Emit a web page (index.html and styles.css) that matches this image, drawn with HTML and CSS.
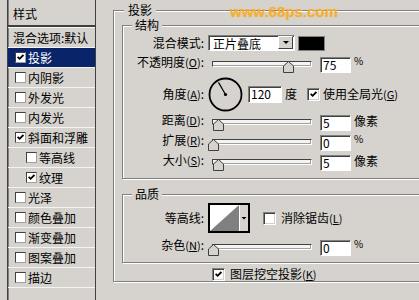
FILE: index.html
```html
<!DOCTYPE html>
<html lang="zh-CN">
<head>
  <meta charset="UTF-8" />
  <title>图层样式 - 投影</title>
  <link rel="stylesheet" href="styles.css">
</head>
<body>
  <div class="dialog">
    <div class="style-list">
      <div class="list-head">样式</div>
      <div class="list-item blend">混合选项:默认</div>
      <div class="list-item active"><span class="cb"><svg class="tick" viewBox="0 0 7 7"><path d="M0.6 2.8 L2.6 4.8 L6.4 1"/></svg></span>投影</div>
      <div class="list-item"><span class="cb"></span>内阴影</div>
      <div class="list-item"><span class="cb"></span>外发光</div>
      <div class="list-item"><span class="cb"></span>内发光</div>
      <div class="list-item"><span class="cb"><svg class="tick" viewBox="0 0 7 7"><path d="M0.6 2.8 L2.6 4.8 L6.4 1"/></svg></span>斜面和浮雕</div>
      <div class="list-item sub"><span class="cb"></span>等高线</div>
      <div class="list-item sub"><span class="cb"><svg class="tick" viewBox="0 0 7 7"><path d="M0.6 2.8 L2.6 4.8 L6.4 1"/></svg></span>纹理</div>
      <div class="list-item"><span class="cb"></span>光泽</div>
      <div class="list-item"><span class="cb"></span>颜色叠加</div>
      <div class="list-item"><span class="cb"></span>渐变叠加</div>
      <div class="list-item"><span class="cb"></span>图案叠加</div>
      <div class="list-item"><span class="cb"></span>描边</div>
      <div class="list-item"></div>
    </div>

    <div class="panel">
      <span class="watermark">www.68ps.com</span>

      <fieldset class="group outer">
        <legend>投影</legend>

        <fieldset class="group struct">
          <legend>结构</legend>

          <div class="row mode-row">
            <span class="label">混合模式:</span>
            <div class="select">
              <span class="val">正片叠底</span>
              <span class="drop"><i class="arrow"></i></span>
            </div>
            <span class="swatch"></span>
          </div>

          <div class="row slider-row first">
            <span class="label">不透明度<span class="key">(<u>O</u>)</span>:</span>
            <div class="track"><svg class="thumb" style="left: 70px" viewBox="0 0 11 12"><path d="M0.5 11.5 V5 L5.5 0.5 L10.5 5 V11.5 Z"/></svg></div>
            <span class="num">75</span>
            <span class="unit pct">%</span>
          </div>

          <div class="row angle-row">
            <span class="label">角度<span class="key">(<u>A</u>)</span>:</span>
            <svg class="dial" width="35" height="35" viewBox="0 0 35 35">
              <circle cx="17.5" cy="17.5" r="16" fill="none" stroke="#000" stroke-width="1.8"/>
              <line x1="17.5" y1="17.5" x2="10.5" y2="5.4" stroke="#000" stroke-width="1.2"/>
              <circle cx="17.5" cy="17.5" r="1.6" fill="#000"/>
            </svg>
            <span class="num wide">120</span>
            <span class="unit">度</span>
            <span class="cb global"><svg class="tick" viewBox="0 0 7 7"><path d="M0.6 2.8 L2.6 4.8 L6.4 1"/></svg></span>
            <span class="cb-text">使用全局光<span class="key">(<u>G</u>)</span></span>
          </div>

          <div class="row slider-row">
            <span class="label">距离<span class="key">(<u>D</u>)</span>:</span>
            <div class="track"><svg class="thumb" style="left: 0px" viewBox="0 0 11 12"><path d="M0.5 11.5 V5 L5.5 0.5 L10.5 5 V11.5 Z"/></svg></div>
            <span class="num">5</span>
            <span class="unit">像素</span>
          </div>

          <div class="row slider-row">
            <span class="label">扩展<span class="key">(<u>R</u>)</span>:</span>
            <div class="track"><svg class="thumb" style="left: -5px" viewBox="0 0 11 12"><path d="M0.5 11.5 V5 L5.5 0.5 L10.5 5 V11.5 Z"/></svg></div>
            <span class="num">0</span>
            <span class="unit pct">%</span>
          </div>

          <div class="row slider-row">
            <span class="label">大小<span class="key">(<u>S</u>)</span>:</span>
            <div class="track"><svg class="thumb" style="left: 0px" viewBox="0 0 11 12"><path d="M0.5 11.5 V5 L5.5 0.5 L10.5 5 V11.5 Z"/></svg></div>
            <span class="num">5</span>
            <span class="unit">像素</span>
          </div>
        </fieldset>

        <fieldset class="group quality">
          <legend>品质</legend>

          <div class="row contour-row">
            <span class="label">等高线:</span>
            <svg class="contour" width="42" height="30" viewBox="0 0 42 30">
              <rect x="0" y="0" width="42" height="30" fill="#000"/>
              <rect x="2" y="2" width="29" height="26" fill="#fff"/>
              <polygon points="2,28 31,2 31,28" fill="#808080"/>
              <rect x="31" y="2" width="9" height="26" fill="#d6d3ce"/>
              <line x1="31.5" y1="2" x2="31.5" y2="28" stroke="#fff"/>
              <polygon points="33.5,14 38.5,14 36,16.5" fill="#000"/>
            </svg>
            <span class="cb aa"></span>
            <span class="cb-text">消除锯齿<span class="key">(<u>L</u>)</span></span>
          </div>

          <div class="row slider-row noise">
            <span class="label">杂色<span class="key">(<u>N</u>)</span>:</span>
            <div class="track"><svg class="thumb" style="left: -5px" viewBox="0 0 11 12"><path d="M0.5 11.5 V5 L5.5 0.5 L10.5 5 V11.5 Z"/></svg></div>
            <span class="num">0</span>
            <span class="unit pct">%</span>
          </div>
        </fieldset>

        <div class="row knockout">
          <span class="cb"><svg class="tick" viewBox="0 0 7 7"><path d="M0.6 2.8 L2.6 4.8 L6.4 1"/></svg></span>
          <span class="cb-text">图层挖空投影<span class="key">(<u>K</u>)</span></span>
        </div>
      </fieldset>
    </div>
  </div>
</body>
</html>
```

FILE: styles.css
```css
* {
  box-sizing: border-box;
}

html, body {
  margin: 0;
  padding: 0;
}

body {
  width: 419px;
  height: 300px;
  overflow: hidden;
  background: #d6d3ce;
  color: #000;
  font-family: "Noto Sans CJK SC", "DejaVu Sans", sans-serif;
  font-size: 12px;
  line-height: 14px;
}

.dialog {
  display: flex;
  height: 300px;
  padding-left: 7px;
}

/* left list of styles */
.style-list {
  flex: none;
  width: 89px;
  border-left: 1px solid #404040;
  border-right: 1px solid #404040;
  box-shadow: inset 1px 0 0 #808080;
}

.list-head {
  height: 27px;
  padding: 7px 0 0 5px;
  border-bottom: 2px solid #404040;
}

.list-item {
  display: flex;
  align-items: center;
  gap: 2px;
  height: 20px;
  padding-left: 7px;
  border-bottom: 1px solid #f4f4f4;
}

.list-item.blend {
  height: 21px;
  padding-left: 5px;
  border-top: 1px solid #f4f4f4;
}

.list-item.active {
  background: #0a246a;
  color: #fff;
}

.list-item.sub {
  padding-left: 18px;
}

/* checkbox */
.cb {
  flex: none;
  display: inline-flex;
  align-items: center;
  justify-content: center;
  width: 13px;
  height: 13px;
  background: #fff;
  border: 1px solid;
  border-color: #808080 #fff #fff #808080;
  box-shadow: inset 1px 1px 0 #404040, inset -1px -1px 0 #d4d0c8;
}

.style-list .cb {
  width: 11px;
  height: 11px;
  border-color: #404040 #a0a0a0 #a0a0a0 #404040;
  box-shadow: none;
}

.tick {
  width: 7px;
  height: 7px;
  fill: none;
  stroke: #000;
  stroke-width: 1.8;
}

/* right panel */
.panel {
  position: relative;
  flex: 1;
  margin-left: 17px;
  padding-top: 3px;
}

.watermark {
  position: absolute;
  left: 117px;
  top: 3px;
  z-index: 1;
  font-family: "Liberation Sans", Arial, sans-serif;
  font-size: 15px;
  font-weight: bold;
  line-height: 17px;
  color: rgba(247, 172, 40, 0.85);
  text-shadow: 0 0 1px rgba(247, 172, 40, 0.6);
}

.group {
  margin: 0;
  padding: 0;
  min-width: 0;
  border: 1px solid #808080;
  box-shadow: inset 1px 1px 0 #fff, 1px 1px 0 #fff;
}

.group legend {
  margin-left: 9px;
  padding: 0 3px;
  line-height: 14px;
  background: #d6d3ce;
}

.outer {
  width: 330px;
  padding: 1px 0 0 8px;
}

.outer > legend {
  margin-left: 2px;
  padding: 0 4px;
}

.struct {
  padding: 1px 0 5px;
}

.quality {
  margin-top: 8px;
  padding: 2px 0 4px;
}

.row {
  display: flex;
  align-items: flex-start;
  height: 20px;
}

.label {
  flex: none;
  width: 82px;
  padding-right: 1px;
  text-align: right;
}

.key {
  font-size: 11px;
}

.mode-row {
  align-items: center;
}

.select {
  display: flex;
  width: 87px;
  height: 16px;
  margin-left: 3px;
  padding: 1px;
  background: #fff;
  border: 1px solid;
  border-color: #808080 #fff #fff #808080;
  box-shadow: inset 1px 1px 0 #404040;
}

.select .val {
  flex: 1;
  padding-left: 3px;
  line-height: 13px;
}

.drop {
  display: flex;
  align-items: center;
  justify-content: center;
  width: 15px;
  height: 13px;
  margin-top: -1px;
  background: #d6d3ce;
  border: 1px solid;
  border-color: #fff #404040 #404040 #fff;
}

.arrow {
  width: 0;
  height: 0;
  border-left: 3px solid transparent;
  border-right: 3px solid transparent;
  border-top: 3px solid #000;
}

.swatch {
  width: 27px;
  height: 15px;
  margin-left: 3px;
  background: #000;
  border: 1px solid #808080;
}

.slider-row.first {
  margin-top: 2px;
}

.track {
  position: relative;
  flex: none;
  width: 100px;
  height: 6px;
  margin-left: 7px;
  margin-top: 6px;
  background: #f4f4f4;
  border: 1px solid;
  border-color: #404040 #fff #fff #404040;
  box-shadow: inset -1px -1px 0 #a0a0a0;
}

.thumb {
  position: absolute;
  top: -1px;
  width: 11px;
  height: 12px;
  fill: #d6d3ce;
  stroke: #404040;
}

.num {
  flex: none;
  width: 31px;
  height: 16px;
  margin-left: 8px;
  margin-top: 2px;
  padding-left: 2px;
  line-height: 14px;
  background: #fff;
  border: 1px solid;
  border-color: #808080 #fff #fff #808080;
  box-shadow: inset 1px 1px 0 #404040;
}

.num.wide {
  width: 34px;
  height: 17px;
  margin-left: 5px;
}

.unit {
  margin-left: 3px;
  margin-top: 1px;
}

.unit.pct {
  font-size: 10px;
  line-height: 10px;
  margin-top: 1px;
}

.angle-row {
  height: 38px;
  align-items: center;
}

.angle-row .num,
.angle-row .unit {
  margin-top: 0;
}

.dial {
  flex: none;
  margin-left: 3px;
}

.cb.global {
  margin-left: 10px;
}

.cb-text {
  margin-left: 3px;
}

.contour-row {
  height: 30px;
  align-items: center;
}

.contour {
  flex: none;
  margin-left: 3px;
}

.cb.aa {
  margin-left: 13px;
}

.contour-row .cb-text {
  margin-left: 5px;
}

.noise {
  margin-top: 5px;
}

.knockout {
  align-items: center;
  height: 14px;
  margin-top: 4px;
  margin-left: 90px;
}

.knockout .cb-text {
  margin-left: 5px;
}
```
